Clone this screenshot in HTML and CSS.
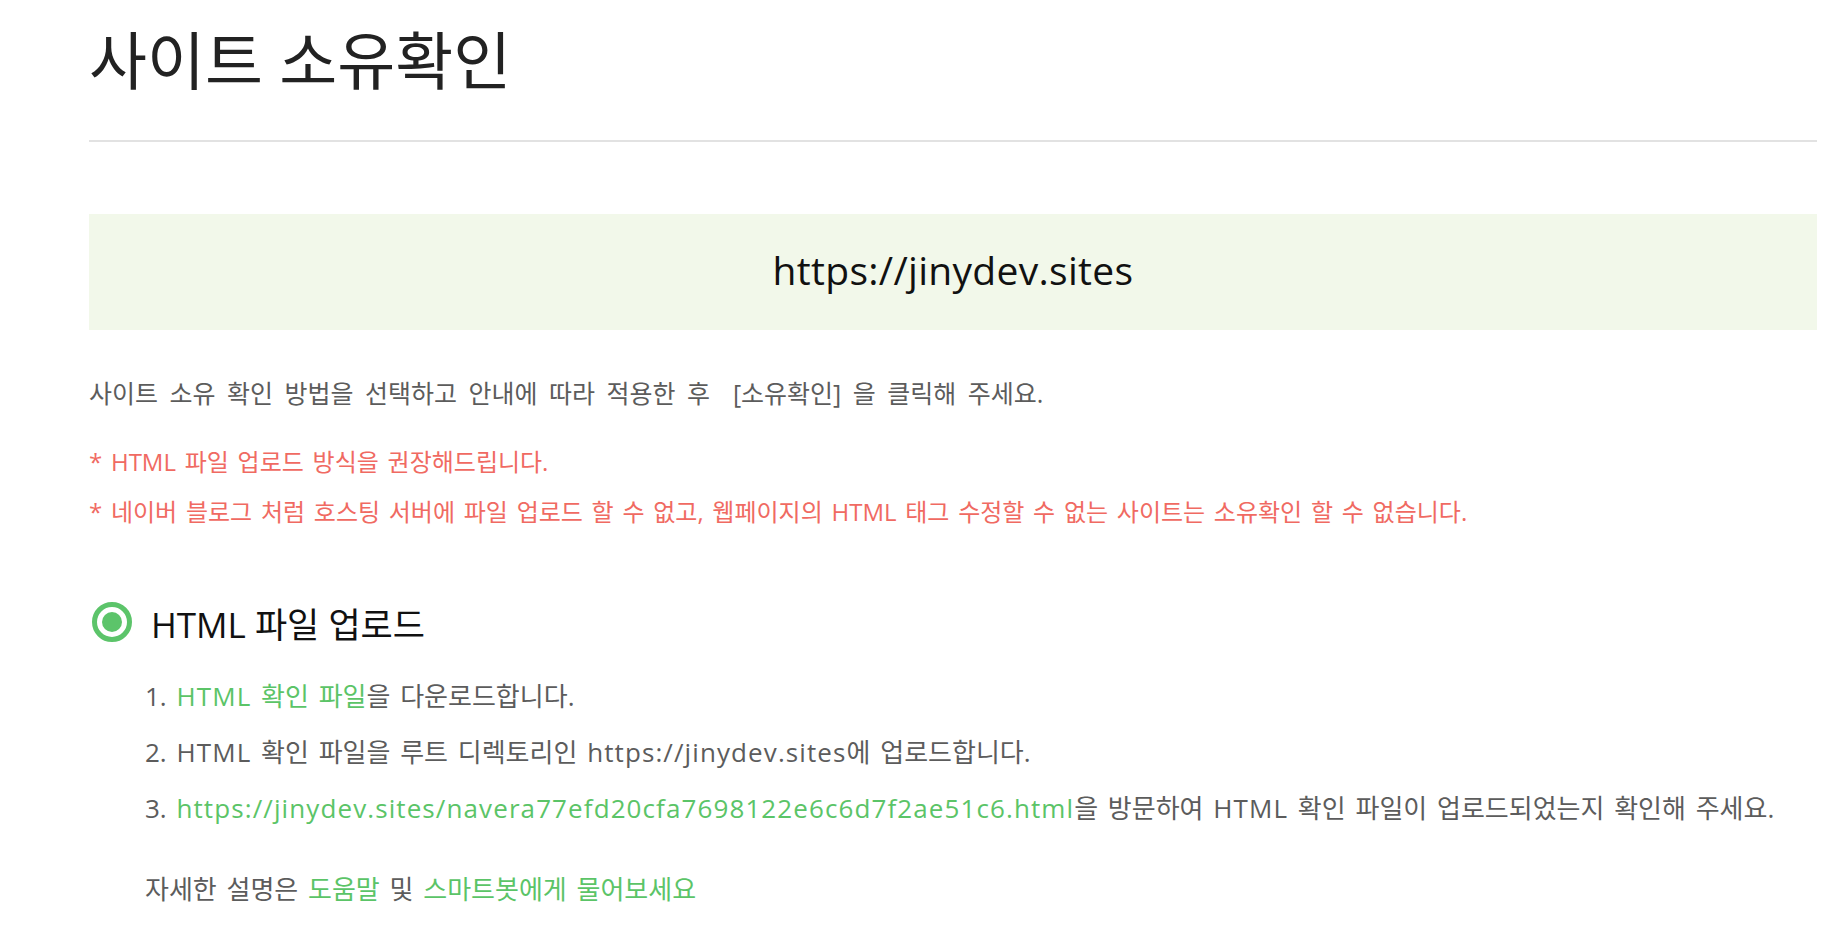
FILE: index.html
```html
<!DOCTYPE html>
<html lang="ko">
<head>
<meta charset="utf-8">
<title>사이트 소유확인</title>
<link rel="stylesheet" href="styles.css">
</head>
<body>
<div class="page">
  <h1 class="title">사이트 소유확인</h1>
  <div class="site-box">https://jinydev.sites</div>
  <p class="desc">사이트 소유 확인 방법을 선택하고 안내에 따라 적용한 후 &nbsp;[소유확인] 을 클릭해 주세요.</p>
  <ul class="notes">
    <li>* HTML 파일 업로드 방식을 권장해드립니다.</li>
    <li>* 네이버 블로그 처럼 호스팅 서버에 파일 업로드 할 수 없고, 웹페이지의 HTML 태그 수정할 수 없는 사이트는 소유확인 할 수 없습니다.</li>
  </ul>
  <section class="method">
    <div class="method-head">
      <span class="radio"><span class="radio-dot"></span></span>
      <span class="method-title">HTML 파일 업로드</span>
    </div>
    <ol class="steps">
      <li><a class="link" href="#"><span class="latin">HTML</span> 확인 파일</a>을 다운로드합니다.</li>
      <li><span class="latin">HTML</span> 확인 파일을 루트 디렉토리인 <span class="latin">https://jinydev.sites</span>에 업로드합니다.</li>
      <li><a class="link latin" href="#">https://jinydev.sites/navera77efd20cfa7698122e6c6d7f2ae51c6.html</a>을 방문하여 <span class="latin">HTML</span> 확인 파일이 업로드되었는지 확인해 주세요.</li>
    </ol>
    <p class="help">자세한 설명은 <a class="link" href="#">도움말</a> 및 <a class="link" href="#">스마트봇에게 물어보세요</a></p>
  </section>
</div>
</body>
</html>
```

FILE: styles.css
```css
html, body {
  margin: 0;
  padding: 0;
  background: #fff;
}

body {
  font-family: "Open Sans", "Noto Sans CJK KR", sans-serif;
  color: #5c5c5c;
}

.page {
  padding: 0 7px 0 89px;
}

.title {
  margin: 0;
  padding: 19px 0 39px;
  font-size: 63px;
  line-height: 82px;
  font-weight: 400;
  color: #222;
  border-bottom: 2px solid #e2e2e2;
}

.site-box {
  box-sizing: border-box;
  margin-top: 72px;
  height: 116px;
  padding-bottom: 6px;
  display: flex;
  align-items: center;
  justify-content: center;
  background: #f2f8ea;
  font-size: 39px;
  letter-spacing: 0.3px;
  color: #111;
}

.desc {
  margin: 43px 0 0;
  font-size: 25px;
  line-height: 40px;
  word-spacing: 5px;
  color: #5c5c5c;
}

.notes {
  list-style: none;
  margin: 24px 0 0;
  padding: 0;
  font-size: 24px;
  line-height: 50px;
  word-spacing: 2.5px;
  color: #f06a62;
}

.method {
  margin-top: 65px;
}

.method-head {
  display: flex;
  align-items: center;
  height: 40px;
}

.radio {
  box-sizing: border-box;
  width: 40px;
  height: 40px;
  margin-left: 3px;
  border: 5px solid #5cc46a;
  border-radius: 50%;
  display: flex;
  align-items: center;
  justify-content: center;
}

.radio-dot {
  width: 20px;
  height: 20px;
  border-radius: 50%;
  background: #5cc46a;
}

.method-title {
  margin-left: 19px;
  font-size: 35px;
  color: #111;
}

.steps {
  list-style: decimal inside;
  margin: 26px 0 0;
  padding: 0 0 0 56px;
  font-size: 26px;
  line-height: 56px;
  word-spacing: 3px;
  color: #5c5c5c;
}

.latin {
  letter-spacing: 1.1px;
}

.link {
  color: #5bc467;
  text-decoration: none;
}

.help {
  margin: 33px 0 0 56px;
  font-size: 26px;
  line-height: 40px;
  word-spacing: 3px;
  color: #5c5c5c;
}
```
